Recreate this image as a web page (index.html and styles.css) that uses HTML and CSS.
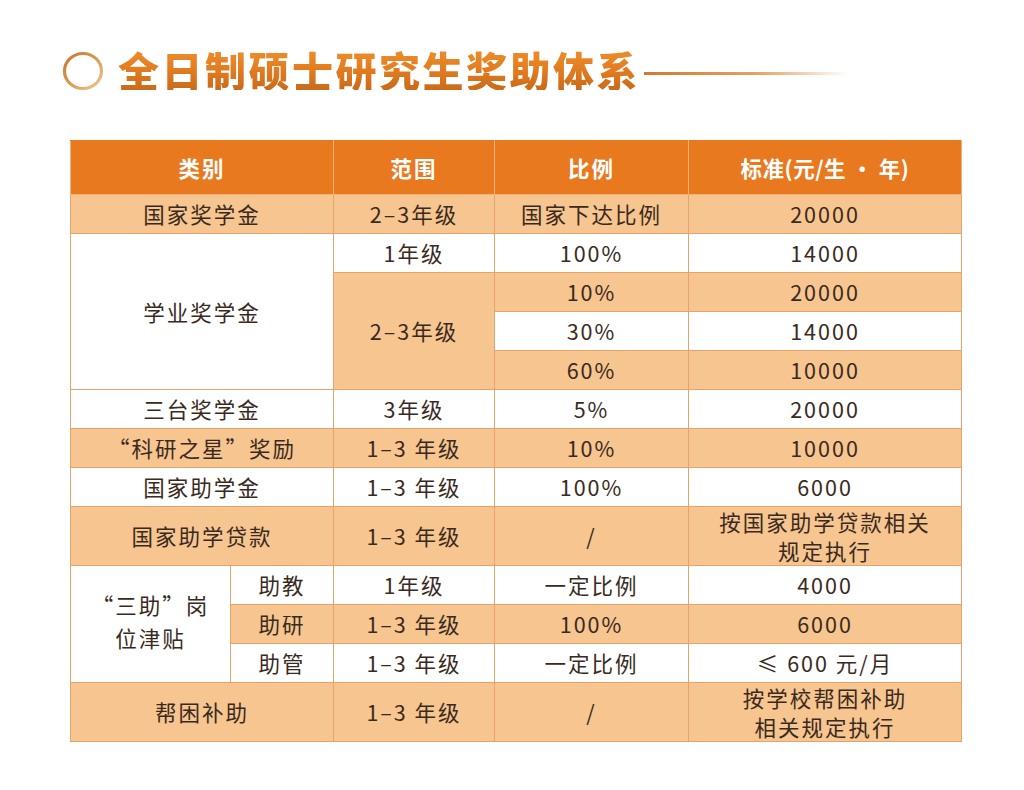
FILE: index.html
```html
<!DOCTYPE html>
<html lang="zh-CN">
<head>
<meta charset="utf-8">
<title>全日制硕士研究生奖助体系</title>
<link rel="stylesheet" href="styles.css">
</head>
<body>
<div class="page">
  <div class="title-row">
    <svg class="ring" width="42" height="40" viewBox="0 0 42 40">
      <defs>
        <linearGradient id="rg" x1="0" y1="0" x2="1" y2="1">
          <stop offset="0" stop-color="#c9772c"/>
          <stop offset="0.5" stop-color="#d99a55"/>
          <stop offset="1" stop-color="#ecc995"/>
        </linearGradient>
      </defs>
      <ellipse cx="21" cy="20" rx="18.5" ry="17.5" fill="none" stroke="url(#rg)" stroke-width="3.2"/>
    </svg>
    <h1 class="title">全日制硕士研究生奖助体系</h1>
    <div class="title-line"></div>
  </div>

  <table class="grid">
    <colgroup>
      <col class="c-a"><col class="c-b"><col class="c-c"><col class="c-d"><col class="c-e">
    </colgroup>
    <thead>
      <tr class="head">
        <th colspan="2">类别</th>
        <th>范围</th>
        <th>比例</th>
        <th class="std">标准(元/生 · 年)</th>
      </tr>
    </thead>
    <tbody>
      <tr>
        <td colspan="2" class="o">国家奖学金</td>
        <td class="o">2–3年级</td>
        <td class="o">国家下达比例</td>
        <td class="o">20000</td>
      </tr>
      <tr>
        <td colspan="2" rowspan="4" class="w">学业奖学金</td>
        <td class="w">1年级</td>
        <td class="w">100%</td>
        <td class="w">14000</td>
      </tr>
      <tr>
        <td rowspan="3" class="o">2–3年级</td>
        <td class="o">10%</td>
        <td class="o">20000</td>
      </tr>
      <tr>
        <td class="w">30%</td>
        <td class="w">14000</td>
      </tr>
      <tr>
        <td class="o">60%</td>
        <td class="o">10000</td>
      </tr>
      <tr>
        <td colspan="2" class="w">三台奖学金</td>
        <td class="w">3年级</td>
        <td class="w">5%</td>
        <td class="w">20000</td>
      </tr>
      <tr>
        <td colspan="2" class="o">“科研之星”奖励</td>
        <td class="o">1–3 年级</td>
        <td class="o">10%</td>
        <td class="o">10000</td>
      </tr>
      <tr>
        <td colspan="2" class="w">国家助学金</td>
        <td class="w">1–3 年级</td>
        <td class="w">100%</td>
        <td class="w">6000</td>
      </tr>
      <tr class="tall">
        <td colspan="2" class="o">国家助学贷款</td>
        <td class="o">1–3 年级</td>
        <td class="o">/</td>
        <td class="o two">按国家助学贷款相关<br>规定执行</td>
      </tr>
      <tr>
        <td rowspan="3" class="w sanzhu">“三助”岗<br>位津贴</td>
        <td class="w">助教</td>
        <td class="w">1年级</td>
        <td class="w">一定比例</td>
        <td class="w">4000</td>
      </tr>
      <tr>
        <td class="o">助研</td>
        <td class="o">1–3 年级</td>
        <td class="o">100%</td>
        <td class="o">6000</td>
      </tr>
      <tr>
        <td class="w">助管</td>
        <td class="w">1–3 年级</td>
        <td class="w">一定比例</td>
        <td class="w">≤ 600 元/月</td>
      </tr>
      <tr class="tall">
        <td colspan="2" class="o">帮困补助</td>
        <td class="o">1–3 年级</td>
        <td class="o">/</td>
        <td class="o two">按学校帮困补助<br>相关规定执行</td>
      </tr>
    </tbody>
  </table>
</div>
</body>
</html>
```

FILE: styles.css
```css
html, body {
  margin: 0;
  padding: 0;
  background: #ffffff;
}

.page {
  width: 1024px;
  height: 790px;
  overflow: hidden;
  font-family: "Noto Sans CJK SC", "Noto Sans", sans-serif;
  color: #3a2a1e;
}

.title-row {
  display: flex;
  align-items: center;
  height: 70px;
  padding: 34px 0 0 62px;
}

.ring {
  flex: none;
  display: block;
  margin-top: 4px;
}

.title {
  margin: 0 0 0 14px;
  font-size: 41px;
  font-weight: 900;
  letter-spacing: 2.5px;
  line-height: 1;
  background: linear-gradient(180deg, #ef8e2b 0%, #e07a1f 55%, #c96b1a 100%);
  -webkit-background-clip: text;
  background-clip: text;
  color: transparent;
}

.title-line {
  width: 205px;
  height: 3px;
  margin: 8px 0 0 4px;
  background: linear-gradient(90deg, #d07a30 0%, #e3a35e 55%, rgba(240, 200, 150, 0) 100%);
}

.grid {
  margin: 36px 0 0 70px;
  border-collapse: collapse;
  table-layout: fixed;
  width: 891px;
}

.c-a { width: 160px; }
.c-b { width: 103px; }
.c-c { width: 161px; }
.c-d { width: 194px; }
.c-e { width: 273px; }

.grid th,
.grid td {
  padding: 0;
  text-align: center;
  vertical-align: middle;
  border: 1px solid #e6a46a;
  font-size: 21.5px;
  letter-spacing: 2px;
  line-height: 1;
}

.grid .head th {
  height: 53px;
  background: #e8791f;
  color: #ffffff;
  font-weight: 700;
  border-color: #f1b27a;
  border-top-color: #e8791f;
}

.grid .head th.std {
  letter-spacing: 0.5px;
}

.grid tbody tr {
  height: 39px;
}

.grid tbody tr.tall {
  height: 59px;
}

.grid td.o {
  background: #f6c590;
}

.grid td.w {
  background: #ffffff;
}

.grid td.two {
  line-height: 29px;
}

.grid td.sanzhu {
  line-height: 33px;
  padding-bottom: 6px;
}
```
